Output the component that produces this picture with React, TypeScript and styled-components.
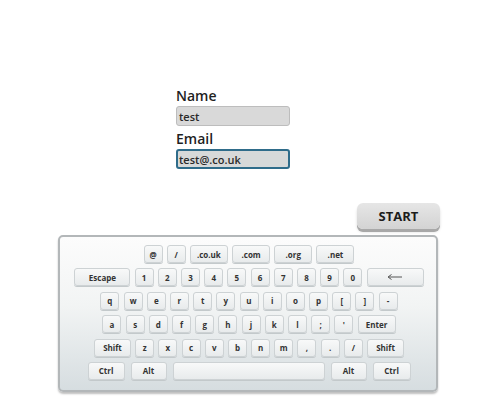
import React from "react";
import styled, { createGlobalStyle } from "styled-components";

const Global = createGlobalStyle`
  html, body { margin: 0; padding: 0; background: #ffffff; }
  body { font-family: "Open Sans", "Liberation Sans", sans-serif; }
`;

const Page = styled.div`
  width: 495px;
  height: 400px;
  display: flex;
  flex-direction: column;
  padding-top: 88px;
  box-sizing: border-box;
  overflow: hidden;
`;

const Form = styled.div`
  margin-left: 176px;
  display: flex;
  flex-direction: column;
  width: 114px;
`;

const Label = styled.div<{ $top?: number }>`
  font-size: 14px;
  line-height: 16px;
  font-weight: 600;
  color: #1f1f1f;
  margin-top: ${(p) => p.$top ?? 0}px;
  margin-bottom: 2px;
`;

const Field = styled.div<{ $focused?: boolean }>`
  height: 20px;
  box-sizing: border-box;
  border-radius: 3px;
  background: ${(p) => (p.$focused ? "#d7d9d9" : "#d9d9d9")};
  border: ${(p) => (p.$focused ? "2px solid #2f6c8a" : "1px solid #bdbdbd")};
  display: flex;
  align-items: center;
  padding-left: ${(p) => (p.$focused ? 1 : 2)}px;
  font-size: 11px;
  font-weight: 600;
  color: #2a2a2a;
`;

const StartButton = styled.div`
  align-self: flex-end;
  margin-right: 55px;
  margin-top: 34px;
  width: 83px;
  height: 26px;
  border-radius: 6px;
  background: linear-gradient(#e6e6e6, #d3d3d3);
  box-shadow: 0 3px 0 #a8a8a8, 0 3px 3px rgba(0, 0, 0, 0.15);
  display: flex;
  align-items: center;
  justify-content: center;
  font-size: 13px;
  font-weight: 700;
  color: #1c1c1c;
`;

const Panel = styled.div`
  margin-top: 6px;
  margin-left: 58px;
  width: 380px;
  height: 157px;
  box-sizing: border-box;
  border: 2px solid #b3b7b9;
  border-radius: 5px;
  background: linear-gradient(#fcfcfc 0%, #f2f4f4 45%, #d6dde0 100%);
  box-shadow: 0 2px 2px rgba(0, 0, 0, 0.25);
  padding-top: 8px;
  display: flex;
  flex-direction: column;
  gap: 5.4px;
`;

const Row = styled.div<{ $gap?: number }>`
  display: flex;
  justify-content: center;
  gap: ${(p) => p.$gap ?? 4.2}px;
  padding-left: 2px;
`;

const Key = styled.div<{ $w?: number }>`
  width: ${(p) => p.$w ?? 19}px;
  height: 18px;
  box-sizing: border-box;
  border: 1px solid #cdd2d4;
  border-radius: 3px;
  background: linear-gradient(#f8f9f9, #e8ebec);
  box-shadow: 0 1px 0 #c3c9cb;
  display: flex;
  align-items: center;
  justify-content: center;
  font-size: 8px;
  font-weight: 700;
  color: #333333;
  flex: none;
`;

const Arrow = () => (
  <svg width="16" height="6" viewBox="0 0 16 6">
    <line x1="2" y1="3" x2="15" y2="3" stroke="#555" strokeWidth="1" />
    <path d="M4.5 0.5 L1 3 L4.5 5.5" fill="none" stroke="#555" strokeWidth="1" />
  </svg>
);

type K = { t: React.ReactNode; w?: number };

const rows: { keys: K[]; gap?: number }[] = [
  {
    keys: [
      { t: "@" },
      { t: "/" },
      { t: ".co.uk", w: 38 },
      { t: ".com", w: 38 },
      { t: ".org", w: 38 },
      { t: ".net", w: 38 },
    ],
  },
  {
    keys: [
      { t: "Escape", w: 56 },
      ..."1234567890".split("").map((c) => ({ t: c })),
      { t: <Arrow />, w: 57 },
    ],
  },
  {
    keys: "qwertyuiop[]-".split("").map((c) => ({ t: c })),
  },
  {
    keys: [
      ..."asdfghjkl;'".split("").map((c) => ({ t: c })),
      { t: "Enter", w: 38 },
    ],
  },
  {
    keys: [
      { t: "Shift", w: 37 },
      ..."zxcvbnm,./".split("").map((c) => ({ t: c })),
      { t: "Shift", w: 37 },
    ],
  },
  {
    gap: 6,
    keys: [
      { t: "Ctrl", w: 37 },
      { t: "Alt", w: 36 },
      { t: "", w: 152 },
      { t: "Alt", w: 36 },
      { t: "Ctrl", w: 38 },
    ],
  },
];

export default function App() {
  return (
    <>
      <Global />
      <Page>
        <Form>
          <Label>Name</Label>
          <Field>test</Field>
          <Label $top={5}>Email</Label>
          <Field $focused>test@.co.uk</Field>
        </Form>
        <StartButton>START</StartButton>
        <Panel>
          {rows.map((r, i) => (
            <Row key={i} $gap={r.gap}>
              {r.keys.map((k, j) => (
                <Key key={j} $w={k.w}>
                  {k.t}
                </Key>
              ))}
            </Row>
          ))}
        </Panel>
      </Page>
    </>
  );
}
